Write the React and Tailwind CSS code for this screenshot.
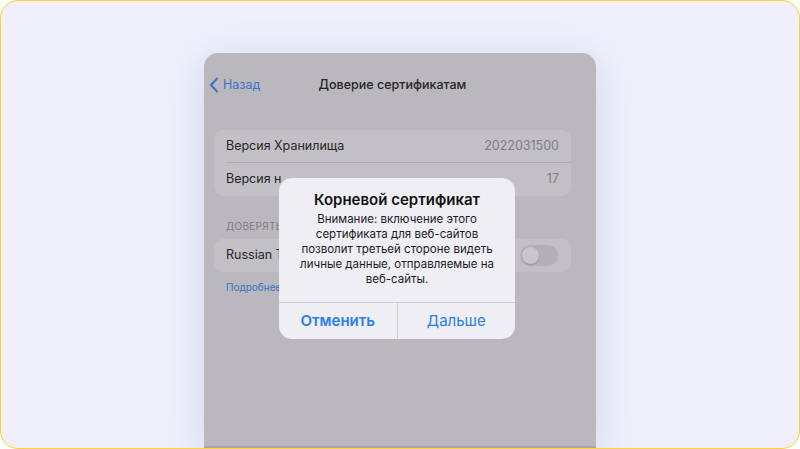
const font = { fontFamily: 'Inter, "Noto Sans", sans-serif' }

function Chevron() {
  return (
    <svg width="10" height="16" viewBox="0 0 10 16" fill="none">
      <path d="M8 1.5 2 8l6 6.5" stroke="#3b73c4" strokeWidth="2" strokeLinecap="round" strokeLinejoin="round" />
    </svg>
  )
}

// labels under the alert are cut where the alert starts
function Row({ label, value, last, clip }) {
  return (
    <div className="flex items-center h-[33px] pl-[12px]">
      <div className={`flex flex-1 items-center h-full pr-[12px] ${last ? '' : 'border-b border-[#afadb2]'}`}>
        <div className="flex-1">
          <div className={`text-[12.5px] text-[#262528] whitespace-nowrap overflow-hidden ${clip ? 'w-[56px]' : ''}`}>{label}</div>
        </div>
        <span className="text-[12.5px] text-[#7f7d83]">{value}</span>
      </div>
    </div>
  )
}

function Alert() {
  return (
    <div className="absolute left-[75px] top-[125px] w-[236px] rounded-[13px] bg-[#efeef4] overflow-hidden">
      <div className="px-[14px] pt-[12px] pb-[15px] text-center">
        <div className="text-[15px] font-semibold text-[#111] leading-[19px]">Корневой сертификат</div>
        <div className="mt-[3px] text-[11.5px] leading-[15px] text-[#1c1c1e]">
          Внимание: включение этого сертификата для веб-сайтов позволит третьей стороне видеть личные данные, отправляемые на веб-сайты.
        </div>
      </div>
      <div className="flex h-[37px] border-t border-[#cfcdd4]">
        <button className="flex-1 text-[15px] font-semibold text-[#2a7ee6]">Отменить</button>
        <div className="w-px bg-[#cfcdd4]" />
        <button className="flex-1 text-[15px] text-[#2a7ee6]">Дальше</button>
      </div>
    </div>
  )
}

export default function App() {
  return (
    <div style={font} className="w-[800px] h-[449px] rounded-[18px] border border-[#fcd235] bg-[#eff0fc] overflow-hidden flex justify-center pt-[52px]">
      <div className="relative w-[392px] flex flex-col rounded-t-[14px] bg-[#bab7bd] shadow-[0_8px_40px_rgba(110,115,170,0.22)]">
        <div className="relative flex items-center h-[20px] mt-[22px] px-[5px]">
          <div className="flex items-center gap-[4px]">
            <Chevron />
            <span className="text-[12.5px] text-[#3b73c4]">Назад</span>
          </div>
          <span className="absolute left-0 right-[15px] text-center text-[12.5px] font-medium text-[#262528] pointer-events-none">Доверие сертификатам</span>
        </div>

        <div className="ml-[10px] mr-[25px] mt-[35px] rounded-[9px] bg-[#c2c0c5]">
          <Row label="Версия Хранилища" value="2022031500" />
          <Row label="Версия надежного ресурса" value="17" last clip />
        </div>

        <div className="ml-[22px] mt-[23px] w-[54px] overflow-hidden text-[10px] tracking-[0.3px] text-[#7f7d83] whitespace-nowrap">ДОВЕРЯТЬ КОРНЕВЫМ СЕРТИФИКАТАМ</div>

        <div className="ml-[10px] mr-[25px] mt-[5px] h-[33px] rounded-[9px] bg-[#c2c0c5] flex items-center pl-[12px] pr-[13px]">
          <div className="flex-1">
            <div className="w-[54px] overflow-hidden whitespace-nowrap text-[12.5px] text-[#262528]">Russian Trusted Root CA</div>
          </div>
          <div className="w-[38px] h-[21px] rounded-full bg-[#b2b0b5] p-[2px]">
            <div className="w-[17px] h-[17px] rounded-full bg-[#c8c6cb] shadow-[0_1px_2px_rgba(0,0,0,0.15)]" />
          </div>
        </div>

        <div className="ml-[22px] mt-[8px] w-[54px] overflow-hidden whitespace-nowrap text-[10px] text-[#3b73c4]">Подробнее о доверенных сертификатах</div>

        <div className="flex-1" />
        <div className="h-[2px] bg-[#a9a7b0]" />

        <Alert />
      </div>
    </div>
  )
}
